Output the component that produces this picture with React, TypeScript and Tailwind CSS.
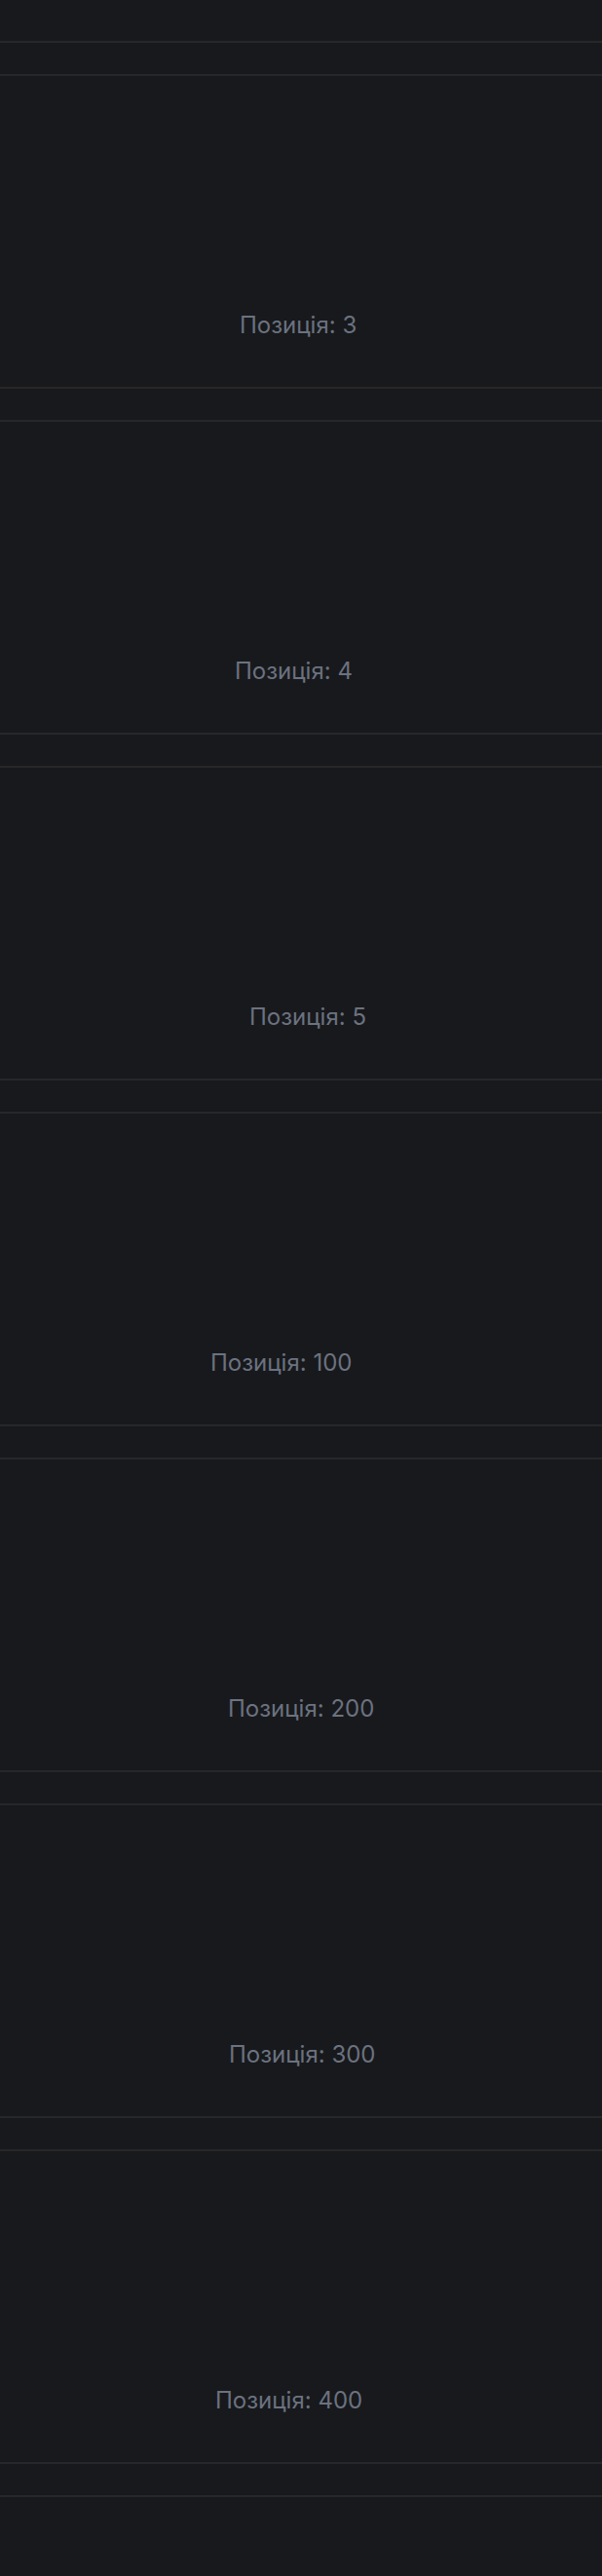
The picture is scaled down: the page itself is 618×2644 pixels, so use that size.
const items = [
  { label: "Позиція: 3", offset: "pl-[246px]" },
  { label: "Позиція: 4", offset: "pl-[241px]" },
  { label: "Позиція: 5", offset: "pl-[256px]" },
  { label: "Позиція: 100", offset: "pl-[216px]" },
  { label: "Позиція: 200", offset: "pl-[234px]" },
  { label: "Позиція: 300", offset: "pl-[235px]" },
  { label: "Позиція: 400", offset: "pl-[221px]" },
];

function Row({ label, offset }: { label: string; offset: string }) {
  return (
    <div className="mt-8 h-[323px] border-y-2 border-[#27272a] flex flex-col justify-end pb-[47px]">
      <div className={`${offset} text-2xl leading-8 text-[#6b7280]`}>{label}</div>
    </div>
  );
}

export default function App() {
  return (
    <div className="min-h-screen h-[2644px] overflow-hidden bg-[#18191c] font-['Inter',sans-serif]">
      <div className="h-[44px] border-b-2 border-[#27272a]" />
      {items.map((item) => (
        <Row key={item.label} label={item.label} offset={item.offset} />
      ))}
      <div className="mt-8 h-[323px] border-t-2 border-[#27272a]" />
    </div>
  );
}
